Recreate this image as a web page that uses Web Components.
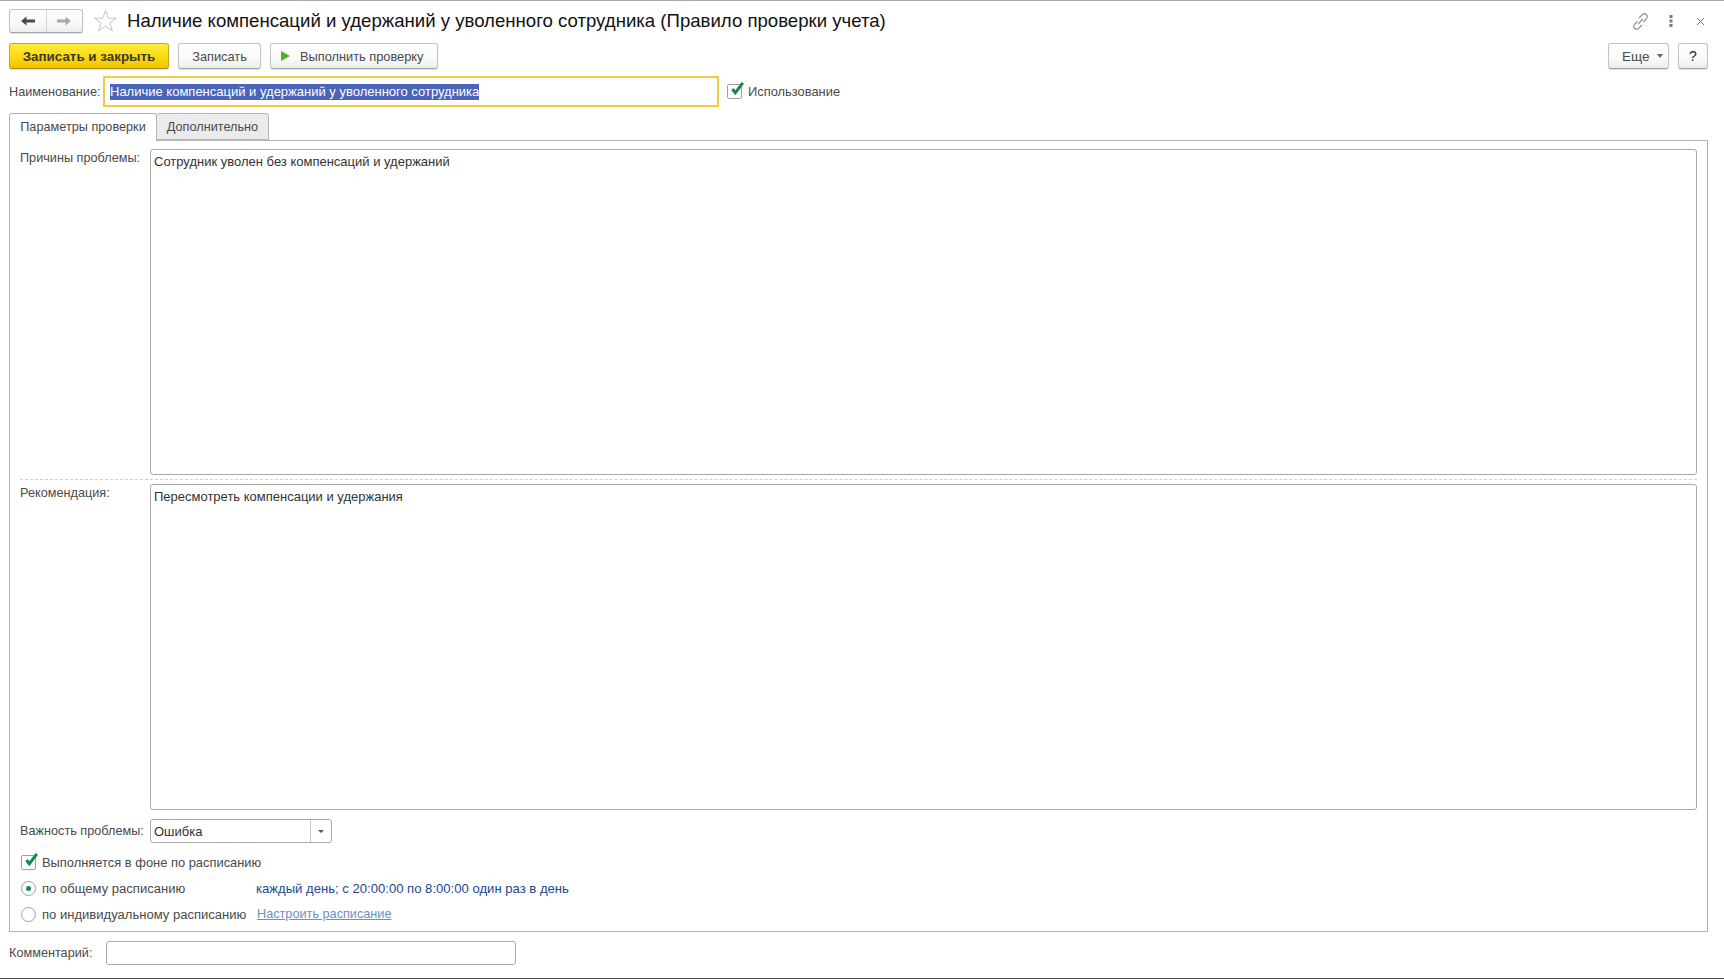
<!DOCTYPE html>
<html lang="ru">
<head>
<meta charset="utf-8">
<title>Правило проверки учета</title>
<style>
html, body { margin: 0; height: 100%; background: #fff; }
body { font: 12.7px "Liberation Sans", Arial, sans-serif; color: #4a4a4a; overflow: hidden; }
</style>
</head>
<body>
<check-rule-form></check-rule-form>
<script>
// Plain button, with a yellow variant for the default action
class UiButton extends HTMLElement {
    constructor() {
        super();
        this.attachShadow({ mode: 'open' });
        this.shadowRoot.innerHTML = `
            <style>
                :host {
                    display: flex; align-items: center; justify-content: center; gap: 8px;
                    box-sizing: border-box; height: 26px; flex: none;
                    border: 1px solid #c2c2c2; border-bottom-color: #a3a3a3; border-radius: 3px;
                    background: linear-gradient(#fff, #fafafa 60%, #ececec);
                    box-shadow: 0 1px 1px rgba(0,0,0,.12);
                    color: #4a4a4a; font-size: 12.8px; white-space: nowrap;
                }
                :host([primary]) {
                    border-color: #c9a815; border-bottom-color: #a98d10;
                    background: linear-gradient(#ffec3d, #fbd90d 55%, #f2c200);
                    color: #3a3a2a; font-weight: bold; font-size: 13.4px;
                }
                ::slotted(svg) { flex: none; }
            </style>
            <slot></slot>`;
    }
}
customElements.define('ui-button', UiButton);

// Back / forward pair in the window header
class NavArrows extends HTMLElement {
    constructor() {
        super();
        this.attachShadow({ mode: 'open' });
        this.shadowRoot.innerHTML = `
            <style>
                :host {
                    display: flex; box-sizing: border-box; width: 74px; height: 24px;
                    border: 1px solid #c2c2c2; border-bottom-color: #a3a3a3; border-radius: 3px;
                    background: linear-gradient(#fff, #f8f8f8 60%, #eee);
                    box-shadow: 0 1px 1px rgba(0,0,0,.12);
                }
                div { flex: 1; display: flex; align-items: center; justify-content: center; }
                div + div { border-left: 1px solid #d4d4d4; }
            </style>
            <div><svg width="16" height="12" viewBox="0 0 16 12"><path d="M1 6 6.5 1.5V4.6H15V7.4H6.5V10.5Z" fill="#4a4a4a"/></svg></div>
            <div><svg width="16" height="12" viewBox="0 0 16 12"><path d="M15 6 9.5 1.5V4.6H1V7.4H9.5V10.5Z" fill="#a8a8a8"/></svg></div>`;
    }
}
customElements.define('nav-arrows', NavArrows);

// Green tick box with its caption in the slot
class UiCheck extends HTMLElement {
    constructor() {
        super();
        this.attachShadow({ mode: 'open' });
        this.shadowRoot.innerHTML = `
            <style>
                :host { display: flex; align-items: center; gap: 6px; white-space: nowrap; font-size: 12.9px; }
                .box { position: relative; box-sizing: border-box; width: 15px; height: 15px; border: 1px solid #a0a0a0; border-radius: 2px; background: #fff; }
                svg { position: absolute; left: 0; top: -4px; }
            </style>
            <span class="box"><svg width="17" height="17" viewBox="0 0 17 17"><path d="M4.5 8 7.3 11.8 14.8 1.8" fill="none" stroke="#12894e" stroke-width="3"/></svg></span>
            <slot></slot>`;
    }
}
customElements.define('ui-check', UiCheck);

// Radio button, the dot shows with the "checked" attribute
class UiRadio extends HTMLElement {
    constructor() {
        super();
        this.attachShadow({ mode: 'open' });
        this.shadowRoot.innerHTML = `
            <style>
                :host { display: flex; align-items: center; gap: 6px; white-space: nowrap; font-size: 13.05px; }
                .ring { box-sizing: border-box; width: 15px; height: 15px; border: 1px solid #a0a0a0; border-radius: 50%; background: #fff; display: flex; align-items: center; justify-content: center; }
                i { display: none; width: 5px; height: 5px; border-radius: 50%; background: #12894e; }
                :host([checked]) i { display: block; }
            </style>
            <span class="ring"><i></i></span>
            <slot></slot>`;
    }
}
customElements.define('ui-radio', UiRadio);

// Bordered input box, slot holds the value
class UiInput extends HTMLElement {
    constructor() {
        super();
        this.attachShadow({ mode: 'open' });
        this.shadowRoot.innerHTML = `
            <style>
                :host {
                    display: flex; align-items: center; box-sizing: border-box; height: 24px; padding: 0 3px;
                    border: 1px solid #a9a9a9; border-radius: 3px; background: #fff; color: #333; white-space: nowrap;
                    font-size: 13px;
                }
                :host([focused]) { height: 31px; padding: 0 5px; border: 2px solid #f1cb45; border-radius: 0; }
                :host([multiline]) { align-items: flex-start; padding-top: 4px; }
            </style>
            <slot></slot>`;
    }
}
customElements.define('ui-input', UiInput);

// Combo box with a dropdown part on the right
class UiSelect extends HTMLElement {
    constructor() {
        super();
        this.attachShadow({ mode: 'open' });
        this.shadowRoot.innerHTML = `
            <style>
                :host {
                    display: flex; box-sizing: border-box; height: 24px; width: 182px;
                    border: 1px solid #a9a9a9; border-radius: 3px; background: #fff; color: #333; font-size: 13px;
                }
                .val { flex: 1; display: flex; align-items: center; padding-left: 3px; }
                .drop { width: 20px; border-left: 1px solid #c6c6c6; display: flex; align-items: center; justify-content: center; }
                .drop i { border: 3px solid transparent; border-top: 3px solid #555; border-bottom: 0; }
            </style>
            <span class="val"><slot></slot></span>
            <span class="drop"><i></i></span>`;
    }
}
customElements.define('ui-select', UiSelect);

// Tab header row; panel content goes in the default slot
class UiTabs extends HTMLElement {
    constructor() {
        super();
        this.attachShadow({ mode: 'open' });
        this.shadowRoot.innerHTML = `
            <style>
                :host { display: flex; flex-direction: column; min-height: 0; }
                .strip { display: flex; height: 28px; position: relative; z-index: 1; margin-bottom: -1px; }
                .tab {
                    box-sizing: border-box; display: flex; align-items: center; justify-content: center;
                    border: 1px solid #b4b4b4; border-bottom: 0; border-radius: 3px 3px 0 0; color: #4a4a4a;
                }
                .on { width: 148px; height: 28px; padding-bottom: 1px; background: #fff; }
                .off { width: 112px; height: 27px; background: #ebebeb; border-left: 0; border-bottom: 1px solid #b4b4b4; }
                .panel { flex: 1; min-height: 0; border: 1px solid #b4b4b4; display: flex; flex-direction: column; }
            </style>
            <div class="strip">
                <span class="tab on"><slot name="active"></slot></span>
                <span class="tab off"><slot name="other"></slot></span>
            </div>
            <div class="panel"><slot></slot></div>`;
    }
}
customElements.define('ui-tabs', UiTabs);

// Label on the left, long text box on the right
class MemoField extends HTMLElement {
    constructor() {
        super();
        this.attachShadow({ mode: 'open' });
        this.shadowRoot.innerHTML = `
            <style>
                :host { display: flex; height: 326px; padding: 0 10px; }
                .label { width: 130px; flex: none; padding-top: 2px; }
                ui-input { flex: 1; height: auto; }
            </style>
            <span class="label">${this.getAttribute('label')}</span>
            <ui-input multiline><slot></slot></ui-input>`;
    }
}
customElements.define('memo-field', MemoField);

// The whole form
class CheckRuleForm extends HTMLElement {
    constructor() {
        super();
        this.attachShadow({ mode: 'open' });
        this.shadowRoot.innerHTML = `
            <style>
                :host {
                    display: flex; flex-direction: column; box-sizing: border-box; height: 979px; padding: 0 16px 0 9px;
                    border-top: 1px solid #a8a8a8; border-bottom: 1px solid #4a4a4a;
                }
                .head { display: flex; align-items: center; box-sizing: border-box; height: 42px; padding-bottom: 2px; flex: none; }
                .star { margin: 0 9px 0 10px; }
                h1 { margin: 0; font: 18.6px "Liberation Sans", Arial, sans-serif; color: #111; flex: 1; white-space: nowrap; }
                .tools { display: flex; align-items: center; margin-right: 3px; }
                .tools svg { flex: none; }
                .bar { display: flex; gap: 9px; height: 26px; flex: none; }
                .bar .push { margin-left: auto; }
                .name { display: flex; align-items: center; height: 31px; margin-top: 7px; flex: none; }
                .name span { width: 94px; flex: none; }
                .name ui-input { width: 616px; margin-right: 8px; }
                .sel { background: #4c64b8; color: #fff; line-height: 16px; font-weight: normal; }
                ui-tabs { flex: 1; margin-top: 6px; }
                .inner { padding-top: 8px; display: flex; flex-direction: column; }
                hr { margin: 4px 10px; height: 0; border: 0; border-top: 1px dashed #d0d0d0; }
                .row { display: flex; align-items: center; padding: 0 10px; }
                .row .cap { width: 130px; flex: none; }
                .important { margin-top: 9px; height: 24px; }
                .bg { height: 26px; padding: 0 11px; margin-top: 6px; }
                .sched { height: 26px; padding: 0 11px; }
                .sched ui-radio { width: 233px; flex: none; }
                .blue { color: #22478f; margin-left: 2px; font-size: 13.1px; }
                a { color: #6c8fc4; text-decoration: underline; margin-left: 3px; }
                .comment { display: flex; align-items: center; height: 24px; margin: 9px 0 13px; flex: none; }
                .comment span { width: 97px; flex: none; }
                .comment ui-input { width: 410px; }
            </style>
            <div class="head">
                <nav-arrows></nav-arrows>
                <svg class="star" width="25" height="24" viewBox="0 0 25 24"><path d="M12.5 1.5 15.3 9.2H23.5L16.9 14 19.4 22 12.5 17.1 5.6 22 8.1 14 1.5 9.2H9.7Z" fill="#fff" stroke="#c4c4c4"/></svg>
                <h1>Наличие компенсаций и удержаний у уволенного сотрудника (Правило проверки учета)</h1>
                <div class="tools">
                    <svg width="17" height="17" viewBox="0 0 17 17" fill="none" stroke="#8a8a8a" stroke-width="1.1"><path d="M7 5 10.2 1.9a2.6 2.6 0 0 1 4.4 3.6L11.5 8.8"/><path d="M10 12 6.8 15.1a2.6 2.6 0 0 1-4.4-3.6L5.5 8.2"/><path d="M6 11 11 6"/></svg>
                    <svg style="margin-left:20px" width="4" height="12" viewBox="0 0 4 12" fill="#7a7a7a"><rect x="0.5" y="0" width="3" height="3"/><rect x="0.5" y="4.5" width="3" height="3"/><rect x="0.5" y="9" width="3" height="3"/></svg>
                    <svg style="margin-left:23px" width="9" height="9" viewBox="0 0 9 9" stroke="#7a7a7a" stroke-width="1"><path d="M1 1 8 8M8 1 1 8"/></svg>
                </div>
            </div>
            <div class="bar">
                <ui-button primary style="width:160px">Записать и закрыть</ui-button>
                <ui-button style="width:83px">Записать</ui-button>
                <ui-button style="width:168px;justify-content:flex-start;padding-left:10px;gap:10px"><svg width="9" height="10" viewBox="0 0 9 10"><path d="M0 0 9 5 0 10Z" fill="#4bb32a"/></svg>Выполнить проверку</ui-button>
                <ui-button class="push" style="width:61px;font-size:13.5px;justify-content:flex-start;padding-left:13px">Еще<svg width="6" height="4" viewBox="0 0 6 4"><path d="M0 0H6L3 4Z" fill="#666"/></svg></ui-button>
                <ui-button style="width:30px;color:#222;font-size:14px">?</ui-button>
            </div>
            <div class="name">
                <span>Наименование:</span>
                <ui-input focused><b class="sel">Наличие компенсаций и удержаний у уволенного сотрудника</b></ui-input>
                <ui-check>Использование</ui-check>
            </div>
            <ui-tabs>
                <span slot="active">Параметры проверки</span>
                <span slot="other">Дополнительно</span>
                <div class="inner">
                    <memo-field label="Причины проблемы:">Сотрудник уволен без компенсаций и удержаний</memo-field>
                    <hr>
                    <memo-field label="Рекомендация:">Пересмотреть компенсации и удержания</memo-field>
                    <div class="row important"><span class="cap">Важность проблемы:</span><ui-select>Ошибка</ui-select></div>
                    <div class="row bg"><ui-check>Выполняется в фоне по расписанию</ui-check></div>
                    <div class="row sched"><ui-radio checked>по общему расписанию</ui-radio><span class="blue">каждый день; с 20:00:00 по 8:00:00 один раз в день</span></div>
                    <div class="row sched"><ui-radio>по индивидуальному расписанию</ui-radio><a>Настроить расписание</a></div>
                </div>
            </ui-tabs>
            <div class="comment"><span>Комментарий:</span><ui-input></ui-input></div>`;
    }
}
customElements.define('check-rule-form', CheckRuleForm);
</script>
</body>
</html>
